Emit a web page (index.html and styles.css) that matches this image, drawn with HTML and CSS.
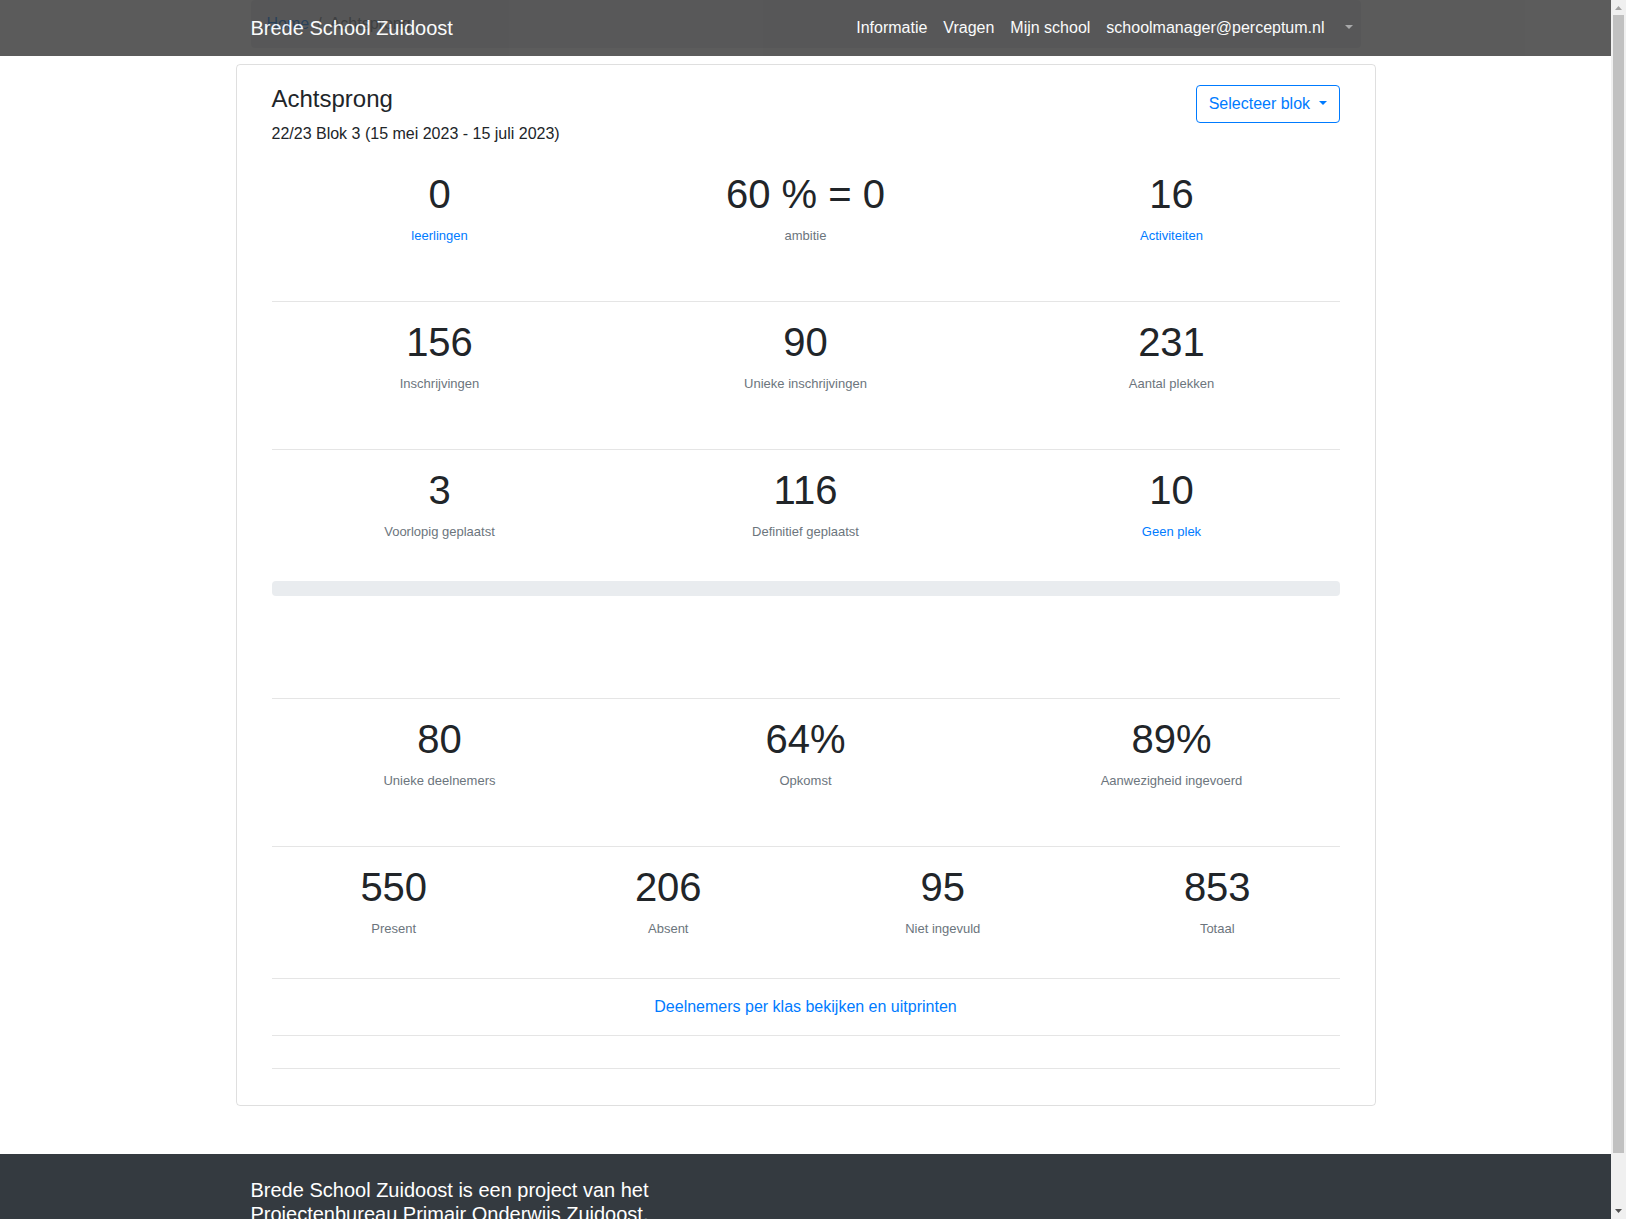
FILE: index.html
```html
<!DOCTYPE html>
<html lang="nl">
<head>
<meta charset="utf-8">
<meta name="viewport" content="width=device-width, initial-scale=1">
<title>Brede School Zuidoost</title>
<link rel="stylesheet" href="styles.css">
</head>
<body>
<div class="viewport">
  <header class="navbar">
    <nav class="container navbar-inner">
      <a class="brand" href="#">Brede School Zuidoost</a>
      <div class="nav-links">
        <a href="#">Informatie</a>
        <a href="#">Vragen</a>
        <a href="#">Mijn school</a>
        <a href="#">schoolmanager@perceptum.nl</a>
        <a class="nav-toggle" href="#" aria-label="Account"><span class="caret"></span></a>
      </div>
    </nav>
  </header>

  <div class="container">
    <nav class="breadcrumb"><a href="#">Home</a><span class="divider">/</span><span>Achtsprong</span></nav>
  </div>

  <main class="card">
    <div class="card-head">
      <div>
        <h1 class="title">Achtsprong</h1>
        <p class="period">22/23 Blok 3 (15 mei 2023 - 15 juli 2023)</p>
      </div>
      <button class="btn" type="button">Selecteer blok <span class="caret"></span></button>
    </div>

    <section class="stats">
      <div class="stat"><div class="value">0</div><a class="label" href="#">leerlingen</a></div>
      <div class="stat"><div class="value">60 % = 0</div><span class="label">ambitie</span></div>
      <div class="stat"><div class="value">16</div><a class="label" href="#">Activiteiten</a></div>
    </section>
    <hr>
    <section class="stats">
      <div class="stat"><div class="value">156</div><span class="label">Inschrijvingen</span></div>
      <div class="stat"><div class="value">90</div><span class="label">Unieke inschrijvingen</span></div>
      <div class="stat"><div class="value">231</div><span class="label">Aantal plekken</span></div>
    </section>
    <hr>
    <section class="stats">
      <div class="stat"><div class="value">3</div><span class="label">Voorlopig geplaatst</span></div>
      <div class="stat"><div class="value">116</div><span class="label">Definitief geplaatst</span></div>
      <div class="stat"><div class="value">10</div><a class="label" href="#">Geen plek</a></div>
    </section>
    <div class="progress"></div>
    <hr>
    <section class="stats">
      <div class="stat"><div class="value">80</div><span class="label">Unieke deelnemers</span></div>
      <div class="stat"><div class="value">64%</div><span class="label">Opkomst</span></div>
      <div class="stat"><div class="value">89%</div><span class="label">Aanwezigheid ingevoerd</span></div>
    </section>
    <hr>
    <section class="stats stats-compact">
      <div class="stat"><div class="value">550</div><span class="label">Present</span></div>
      <div class="stat"><div class="value">206</div><span class="label">Absent</span></div>
      <div class="stat"><div class="value">95</div><span class="label">Niet ingevuld</span></div>
      <div class="stat"><div class="value">853</div><span class="label">Totaal</span></div>
    </section>
    <hr>
    <p class="print"><a href="#">Deelnemers per klas bekijken en uitprinten</a></p>
    <hr>
    <hr>
  </main>

  <footer class="footer">
    <div class="container">
      <p class="footer-text">Brede School Zuidoost is een project van het<br>Projectenbureau Primair Onderwijs Zuidoost.</p>
    </div>
  </footer>
</div>
<div class="scrollbar" aria-hidden="true">
  <svg class="arrow" viewBox="0 0 15 15"><path d="M4 10h7L7.500 6z" fill="#a3a3a3"/></svg>
  <div class="thumb"></div>
  <svg class="arrow" viewBox="0 0 15 15"><path d="M4 5h7L7.500 9z" fill="#505050"/></svg>
</div>
</body>
</html>
```
FILE: styles.css
```css
* {
  box-sizing: border-box;
}

body {
  display: flex;
  height: 100vh;
  margin: 0;
  overflow: hidden;
  background: #fff;
  color: #212529;
  font: 16px/24px "Liberation Sans", Arial, sans-serif;
}

a {
  color: #007bff;
  text-decoration: none;
}

h1,
p {
  margin: 0;
  font-weight: 400;
}

hr {
  margin: 16px 0;
  border: 0;
  border-top: 1px solid rgba(0, 0, 0, .1);
}

.viewport {
  position: relative;
  flex: 1;
  overflow: hidden;
}

.container {
  max-width: 1140px;
  margin: 0 auto;
  padding: 0 15px;
}

/* Translucent bar that stays over the page content */
.navbar {
  position: absolute;
  top: 0;
  left: 0;
  right: 0;
  z-index: 1;
  background: #333;
  opacity: .8;
}

.navbar-inner {
  display: flex;
  align-items: center;
  justify-content: space-between;
  height: 56px;
}

.navbar a {
  color: #fff;
}

.navbar .brand {
  font-size: 20px;
}

.nav-links {
  display: flex;
}

.nav-links a {
  padding: 8px;
}

.navbar .nav-toggle {
  color: rgba(255, 255, 255, .5);
}

.caret {
  display: inline-block;
  margin-left: 4px;
  border: 4px solid transparent;
  border-top-color: currentColor;
  border-bottom: 0;
  vertical-align: 4px;
}

.breadcrumb {
  display: flex;
  gap: 8px;
  margin-bottom: 16px;
  padding: 12px 16px;
  border-radius: 4px;
  background: #e9ecef;
  color: #6c757d;
}

.card {
  max-width: 1140px;
  margin: 0 auto 48px;
  padding: 20px 35px;
  border: 1px solid rgba(0, 0, 0, .125);
  border-radius: 4px;
}

.card-head {
  display: flex;
  align-items: flex-start;
  justify-content: space-between;
  margin-bottom: 24px;
}

.title {
  margin-bottom: 10px;
  font-size: 24px;
  line-height: 27px;
}

.btn {
  padding: 6px 12px;
  border: 1px solid #007bff;
  border-radius: 4px;
  background: transparent;
  color: #007bff;
  font: inherit;
}

.stats {
  display: flex;
  margin: 0 -15px;
  padding-bottom: 39px;
}

.stats-compact {
  padding-bottom: 23px;
}

.stat {
  flex: 1;
  text-align: center;
}

.value {
  margin-bottom: 8px;
  font-size: 40px;
  line-height: 48px;
}

.label {
  display: block;
  font-size: 13px;
  line-height: 20px;
}

span.label {
  color: #6c757d;
}

.progress {
  height: 15px;
  margin-bottom: 102px;
  border-radius: 4px;
  background: #e9ecef;
}

.print {
  text-align: center;
}

.print + hr + hr {
  margin-top: 32px;
}

.footer {
  padding: 24px 0;
  background: #343a40;
  color: #fff;
}

.footer-text {
  font-size: 20px;
}

.scrollbar {
  display: flex;
  flex-direction: column;
  width: 15px;
  background: #f0f0f0;
}

.arrow {
  width: 15px;
  height: 15px;
}

.thumb {
  flex: 1;
  margin: 0 2px 51px;
  background: #c1c1c1;
}
```
